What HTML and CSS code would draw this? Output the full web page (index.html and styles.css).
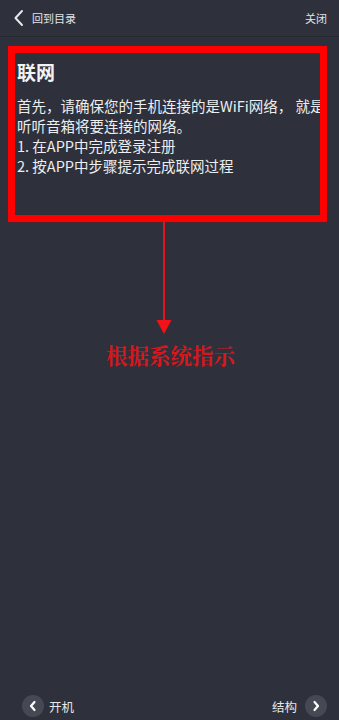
FILE: index.html
```html
<!DOCTYPE html>
<html lang="zh">
<head>
<meta charset="utf-8">
<link rel="stylesheet" href="styles.css">
</head>
<body>
<div class="page">
  <header class="topbar">
    <div class="back">
      <svg class="back-icon" width="12" height="18" viewBox="0 0 12 18"><path d="M9 2 L2.5 9 L9 16" fill="none" stroke="#e6e7ea" stroke-width="2" stroke-linecap="round" stroke-linejoin="round"/></svg>
      <span>回到目录</span>
    </div>
    <span class="close">关闭</span>
  </header>
  <main class="content">
    <h1 class="title">联网</h1>
    <p class="text">首先，请确保您的手机连接的是WiFi网络， 就是听听音箱将要连接的网络。</p>
    <p class="text">1. 在APP中完成登录注册</p>
    <p class="text">2. 按APP中步骤提示完成联网过程</p>
  </main>
  <footer class="bottombar">
    <div class="nav nav-prev">
      <span class="circle"><svg width="10" height="12" viewBox="0 0 10 12"><path d="M6.5 2 L3 6 L6.5 10" fill="none" stroke="#fff" stroke-width="2.2" stroke-linecap="round" stroke-linejoin="round"/></svg></span>
      <span>开机</span>
    </div>
    <div class="nav nav-next">
      <span>结构</span>
      <span class="circle"><svg width="10" height="12" viewBox="0 0 10 12"><path d="M3.5 2 L7 6 L3.5 10" fill="none" stroke="#fff" stroke-width="2.2" stroke-linecap="round" stroke-linejoin="round"/></svg></span>
    </div>
  </footer>
  <div class="annot-box"></div>
  <svg class="annot-arrow" width="18" height="112" viewBox="0 0 18 112"><line x1="9" y1="0" x2="9" y2="100" stroke="#e3141a" stroke-width="2"/><polygon points="1.5,98 16.5,98 9,112" fill="#f0141a"/></svg>
  <div class="annot-text">根据系统指示</div>
</div>
</body>
</html>
```
FILE: styles.css
```css
html, body {
  margin: 0;
  padding: 0;
  background: #2e313b;
}
.page {
  position: relative;
  width: 339px;
  height: 720px;
  display: flex;
  flex-direction: column;
  background: #2e313b;
  color: #eceef0;
  font-family: "Noto Sans CJK SC", "Noto Sans", sans-serif;
  overflow: hidden;
}
.topbar {
  height: 36px;
  border-bottom: 1px solid #262830;
  display: flex;
  align-items: center;
  justify-content: space-between;
  padding: 0 12px 0 13px;
  font-size: 11px;
  color: #e3e4e7;
}
.back {
  display: flex;
  align-items: center;
  gap: 7px;
}
.back-icon {
  display: block;
}
.content {
  flex: 1;
  padding: 22px 0 0 17px;
}
.title {
  margin: 0 0 11px;
  font-size: 19px;
  line-height: 26px;
  font-weight: 700;
  color: #f2f3f5;
}
.text {
  margin: 0;
  font-size: 14.5px;
  line-height: 20px;
  width: 310px;
}
.bottombar {
  height: 28px;
  display: flex;
  align-items: center;
  justify-content: space-between;
  padding: 0 12px 0 22px;
  font-size: 12.5px;
  color: #e6e7ea;
}
.nav {
  display: flex;
  align-items: center;
}
.nav-prev {
  gap: 5px;
}
.nav-next {
  gap: 8px;
}
.circle {
  width: 22px;
  height: 22px;
  border-radius: 50%;
  background: #464954;
  display: flex;
  align-items: center;
  justify-content: center;
}
.circle svg {
  display: block;
}
.annot-box {
  position: absolute;
  left: 8px;
  top: 46px;
  width: 305px;
  height: 162px;
  border: 7px solid #ff0000;
  box-shadow: 0 0 1px #c00000;
}
.annot-arrow {
  position: absolute;
  left: 155px;
  top: 222px;
}
.annot-text {
  position: absolute;
  left: 106px;
  top: 340px;
  font-family: "Noto Serif CJK SC", "Noto Sans CJK SC", serif;
  font-weight: 700;
  font-size: 21.5px;
  line-height: 30px;
  color: #d8171c;
}
```
